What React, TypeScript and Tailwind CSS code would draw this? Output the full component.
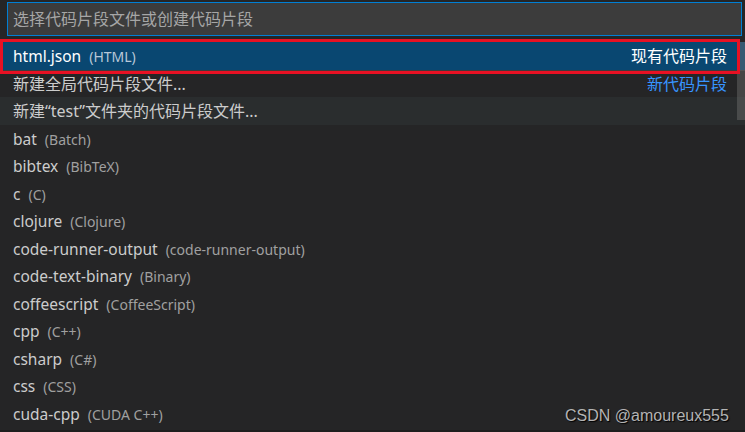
const items: [string, string][] = [
  ["bat", "Batch"],
  ["bibtex", "BibTeX"],
  ["c", "C"],
  ["clojure", "Clojure"],
  ["code-runner-output", "code-runner-output"],
  ["code-text-binary", "Binary"],
  ["coffeescript", "CoffeeScript"],
  ["cpp", "C++"],
  ["csharp", "C#"],
  ["css", "CSS"],
  ["cuda-cpp", "CUDA C++"],
];

const font = "font-['Noto_Sans','Noto_Sans_CJK_SC',sans-serif]";

export default function App() {
  return (
    <div className={`relative flex h-[432px] w-[745px] flex-col overflow-hidden bg-[#252526] ${font}`}>
      {/* search input */}
      <div className="ml-[7px] mr-[3px] mt-[2px] flex h-[34px] items-center border border-[#007fd4] bg-[#3c3c3c] pl-[5px] text-[16px] text-[#a6a6a6]">
        选择代码片段文件或创建代码片段
      </div>

      <div className="mt-[6px] flex flex-col">
        <div className="flex h-[27.5px] items-center justify-between bg-[#094771] pl-[13px] pr-[18px] text-[16px] text-white">
          <div className="flex items-baseline pt-[1px]">
            <span className="text-[15.5px]">html.json</span>
            <span className="ml-[8px] text-[14px] text-[#b8c8d8]">(HTML)</span>
          </div>
          <span>现有代码片段</span>
        </div>
        <div className="flex h-[27.5px] items-center justify-between border-t border-[#3c3c3c] pl-[13px] pr-[18px] text-[16px] text-[#cccccc]">
          <span>新建全局代码片段文件...</span>
          <span className="text-[#3794ff]">新代码片段</span>
        </div>
        <div className="flex h-[27.5px] items-center bg-[#2a2d2e] pl-[13px] text-[16px] text-[#cccccc]">
          新建“test”文件夹的代码片段文件...
        </div>
        {items.map(([name, desc]) => (
          <div key={name} className="flex h-[27.5px] items-baseline pl-[13px] pt-[3px] text-[15.5px] text-[#cccccc]">
            <span>{name}</span>
            <span className="ml-[8px] text-[14px] text-[#a0a0a0]">({desc})</span>
          </div>
        ))}
      </div>
      <div className="flex-1" />
      <div className="h-[2px] bg-[#1e1e1e]" />

      {/* scrollbar slider */}
      <div className="absolute right-0 top-[42px] h-[78px] w-[8px] bg-[#79797966]" />

      {/* annotation box */}
      <div className="absolute left-0 top-[39px] h-[35px] w-[740px] border-[3px] border-[#e81123]" />

      {/* watermark */}
      <div className="absolute left-[565px] top-[404px] font-['Liberation_Sans',sans-serif] text-[16px] text-[#b4b4b4] [text-shadow:1px_1px_1px_#000]">
        CSDN @amoureux555
      </div>
    </div>
  );
}
